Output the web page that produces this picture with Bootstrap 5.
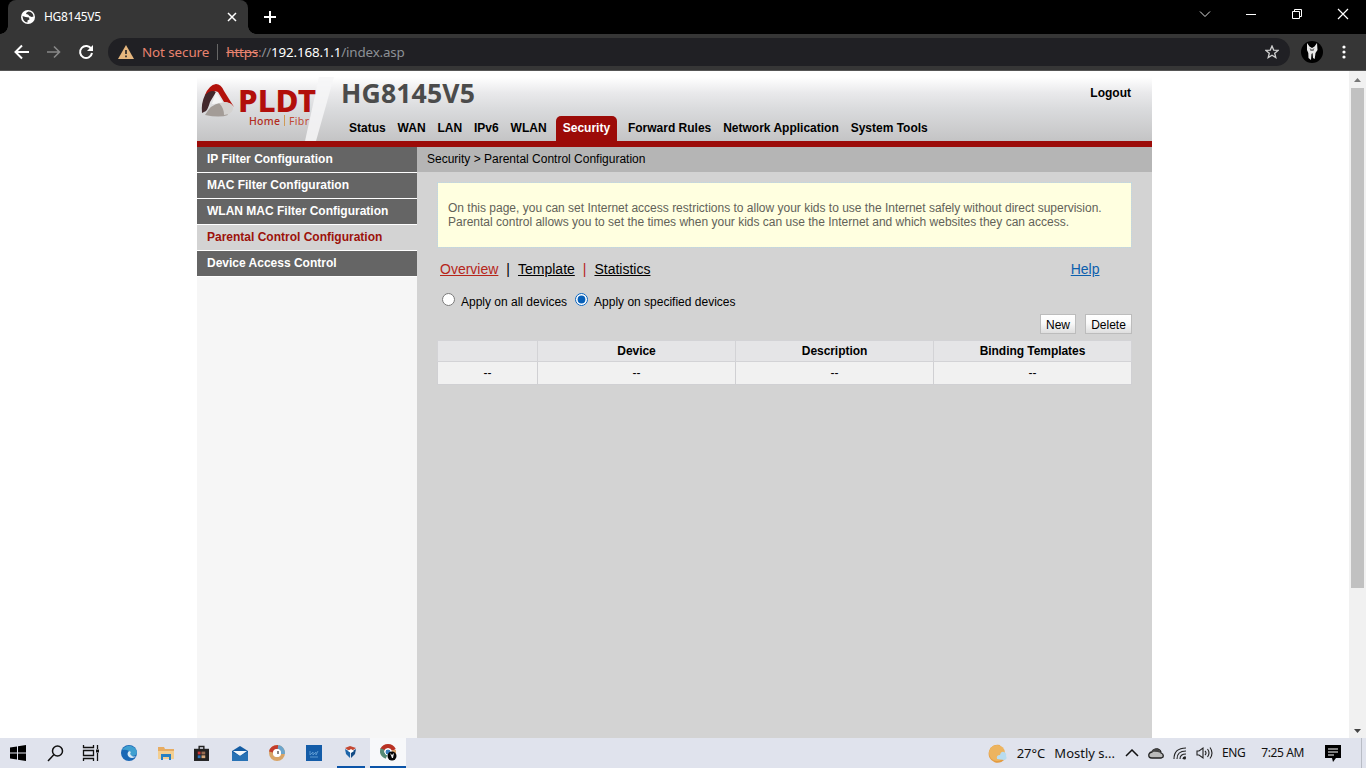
<!DOCTYPE html>
<html lang="en">
<head>
<meta charset="utf-8">
<meta name="viewport" content="width=device-width, initial-scale=1">
<title>HG8145V5</title>
<link href="https://cdn.jsdelivr.net/npm/bootstrap@5.3.0/dist/css/bootstrap.min.css" rel="stylesheet">
<style>
body{height:768px;overflow:hidden;background:#fff;font:12px/14px "Liberation Sans",sans-serif;color:#000}
svg{display:block;flex:none}
a{color:inherit}
.ui{font-family:"Noto Sans","Open Sans",sans-serif}
.tabstrip{height:34px;background:#000;padding-left:8px}
.browser-tab{width:240px;height:34px;background:#363636;border-radius:8px 8px 0 0;color:#fff;padding:0 10px 0 13px;margin-right:15px}
.browser-tab::before,.browser-tab::after{content:"";position:absolute;bottom:0;width:8px;height:8px}
.browser-tab::before{left:-8px;background:radial-gradient(circle at 0 0,#000 7.5px,#363636 8px)}
.browser-tab::after{right:-8px;background:radial-gradient(circle at 100% 0,#000 7.5px,#363636 8px)}
.tab-title{font-size:12px;letter-spacing:-.3px;margin-left:9px}
.win-buttons{gap:34px;margin:0 17px 6px 0}
.toolbar{height:37px;background:#363636;padding:0 14px;border-bottom:1px solid #555}
.nav-icons{gap:16px}
.omnibox{width:1182px;height:28px;border-radius:14px;background:#202024;margin:0 11px 0 14px;padding:0 11px 0 10px;font-size:13.4px}
.warn{color:#e8836f;margin-left:8px;letter-spacing:-.08px}
.urlsep{width:1px;height:16px;background:#666;margin:0 8px}
.url{color:#8d9196;letter-spacing:-.17px}
.url s{color:#e8836f}
.url i{color:#a36a5f;font-style:normal}
.dots{margin-right:6px}
.viewport{height:667px}
.site{width:955px;margin-left:197px;padding-top:6px}
.hdr{height:64px;background:linear-gradient(#fff,#e9e9eb 25%,#dadbdd 50%,#c4c4c5)}
.logo-box{width:144px;height:64px}
.model{font:bold 26.6px/30px "Noto Sans","Open Sans",sans-serif;color:#4b4b4b;margin-top:1px;letter-spacing:.15px}
.logout{margin:9px 21px 0 0}
.menu{height:25px;padding-left:8px;gap:11.9px}
.menu a{text-decoration:none;line-height:24px;white-space:nowrap}
.menu .picked{background:#9c0b08;color:#fff;border-radius:5px 5px 0 0;width:61px;text-align:center;margin:0 -.9px 0 -2.6px}
.redline{height:6px;background:#9c0b08}
.side{width:220px;background:#f6f6f6}
.side a{display:block;height:26px;line-height:24px;padding-left:10px;background:#656565;color:#fff;border-bottom:1px solid #fff;font-weight:bold;text-decoration:none}
.side a.here{background:#d3d3d3;color:#9c120b}
.main{background:#d3d3d3;height:591px}
.crumbs{height:25px;line-height:24px;background:#b5b5b5;padding-left:10px}
.panel{padding:10px 20px 0 20px}
.notice{height:66px;background:#ffffe0 padding-box;border:1px dotted #bcd9e2;padding:18px 10px;color:#626258;white-space:nowrap}
.links{font-size:14px;line-height:18px;margin:12px 32.5px 0 3px}
.links .current{color:#b6251a}
.links .help{color:#0c5fae}
.choices{margin:16px 0 0 5px;height:14px}
.choices input{width:13px;height:13px;margin:-3px 6px 0 0;accent-color:#0860b8}
.choices label{padding-top:1px}
.choices label + input{margin-left:8px}
.actions{margin-top:6px;height:20px;gap:9px}
.tool-btn{width:36px;height:20px;padding:1px 0 0;border:1px solid #bcbcbc;border-radius:0;background:linear-gradient(#fff,#f9f9f9 45%,#dedede);font-size:12px;line-height:18px;color:#000}
.tool-btn.wide{width:47px}
.grid-table{width:695px;margin-top:6px;table-layout:fixed;border:1px solid #d8d8dc;border-collapse:collapse;text-align:center}
.grid-table .pick-col{width:100px}
.grid-table .data-col{width:198px}
.grid-table th{height:21px;background:repeating-conic-gradient(#dedfe2 0 25%,#ebebec 0 50%) 0 0/2px 2px;border:1px solid #d3d3d6;padding:0;letter-spacing:-.05px}
.grid-table td{height:23px;background:#f1f1f1;border:1px solid #d0d0d3;padding:0}
.scroll{width:17px;background:#f1f1f1;padding:7px 0 5px}
.thumb{width:13px;height:500px;background:#c1c1c1;margin-top:6px}
.taskbar{height:30px;background:#e0e3ed;color:#111;font-size:13px}
.task{width:37px;height:30px;display:flex;align-items:center;justify-content:center;padding-right:1px}
.task.running{width:28px;margin-left:4px;border-bottom:2px solid #0b54a8}
.task.active{width:36px;margin-left:5px;background:#f7f8fa}
.weather{gap:9px;margin-right:10px}
.tray{gap:9px}
.clock{font-size:12px;letter-spacing:-.4px;gap:16px;margin:0 21px 0 9px}
.peek{width:1px;height:30px;background:#b8bcc5;margin:0 4px 0 20px}
</style>
</head>
<body>
<header class="ui">
  <div class="tabstrip d-flex align-items-center">
    <div class="browser-tab position-relative d-flex align-items-center">
      <svg width="14" height="14" viewBox="0 0 14 14"><circle cx="7" cy="7" r="7" fill="#fff"/><path d="M7.500 1.500Q5 2 5 4l2 .5 1.500 1.500L10.500 7l2-.5Q12 2 7.500 1.500M1.500 6l3 1 3.500.5.500 2L6.500 10.500v2Q2 12 1.500 6" fill="#363636"/></svg>
      <span class="tab-title">HG8145V5</span>
      <svg class="ms-auto" width="12" height="12" viewBox="0 0 12 12" stroke="#fff" stroke-width="1.5"><path d="M2 2l8 8M10 2l-8 8"/></svg>
    </div>
    <svg width="14" height="14" viewBox="0 0 14 14" stroke="#fff" stroke-width="2"><path d="M7 1v12M1 7h12"/></svg>
    <div class="win-buttons ms-auto d-flex align-items-center">
      <svg width="12" height="12" viewBox="0 0 12 12" fill="none" stroke="#ddd"><path d="M1 3.500l5 5 5-5"/></svg>
      <svg width="12" height="12" viewBox="0 0 12 12" stroke="#fff"><path d="M1 6.500h10"/></svg>
      <svg width="12" height="12" viewBox="0 0 12 12" fill="none" stroke="#fff"><path d="M1.500 3.500h7v7h-7zM3.500 3V1.500h7v7H9"/></svg>
      <svg width="12" height="12" viewBox="0 0 12 12" stroke="#fff" stroke-width="1.200"><path d="M1 1l10 10M11 1L1 11"/></svg>
    </div>
  </div>
  <div class="toolbar d-flex align-items-center">
    <div class="nav-icons d-flex">
      <svg width="16" height="16" viewBox="0 0 16 16" fill="none" stroke="#fff" stroke-width="2"><path d="M15 8H2.500M8 1.500L1.500 8 8 14.500"/></svg>
      <svg width="16" height="16" viewBox="0 0 16 16" fill="none" stroke="#888" stroke-width="1.600"><path d="M1 8h12.500M8 2.500L13.500 8 8 13.500"/></svg>
      <svg width="16" height="16" viewBox="0 0 16 16" fill="none" stroke="#fff" stroke-width="2"><path d="M13.300 5A6 6 0 1 0 14 9"/><path d="M15 1v6H9z" fill="#fff" stroke="none"/></svg>
    </div>
    <div class="omnibox d-flex align-items-center">
      <svg width="16" height="14" viewBox="0 0 16 14"><path d="M8 0l8 14H0z" fill="#e5b67e"/><path d="M8 5v4M8 10.500v1.700" stroke="#202024" stroke-width="1.600"/></svg>
      <span class="warn">Not secure</span><span class="urlsep"></span>
      <span class="url"><s>https</s><i>:</i>//<span class="text-white">192.168.1.1</span>/index.asp</span>
      <svg class="ms-auto" width="14" height="14" viewBox="0 0 14 14" fill="none" stroke="#d0d0d0" stroke-width="1.300"><path d="M7 1l1.700 4.100 4.400.3-3.400 2.800L10.800 12.500 7 10.200 3.200 12.500l1.100-4.300L.9 5.400l4.400-.3z"/></svg>
    </div>
    <svg width="22" height="22" viewBox="0 0 22 22"><circle cx="11" cy="11" r="11" fill="#000"/><path d="M6 2l2.500 3.500L11 7l2.500-1.500L16 2l.5 7-2 3-.8 6-1.700-1-.5-5-1 1-.5 6L7.500 17 7.300 12 6 9z" fill="#e8e8e8"/><path d="M8.500 7l2.500 1.500L13.500 7l-1 3h-3z" fill="#777"/></svg>
    <svg class="dots ms-auto" width="4" height="14" viewBox="0 0 4 14" fill="#fff"><circle cx="2" cy="2" r="1.600"/><circle cx="2" cy="7" r="1.600"/><circle cx="2" cy="12" r="1.600"/></svg>
  </div>
</header>

<div class="viewport d-flex">
  <div class="site">
    <div class="hdr d-flex">
      <svg class="logo-box" viewBox="0 0 144 64">
        <path d="M122 0h15l-18 64h-11z" fill="#f6f6f7" opacity=".85"/>
        <path d="M8 18Q12 8 19 7q5 0 8 7l10 16q-4-5-10-5l-6-10-3-1-8 8z" fill="#b3110b"/>
        <path d="M8 18q6-6 11-3l-6 10q-2 7-4 9l-4 2Q4 26 8 18z" fill="#43282c"/>
        <path d="M19 15l7 11-11 1z" fill="#f5f5f5"/>
        <path d="M8 38q6-11 15-12 6 7 8 12-8 3-23 0z" fill="#a39c97"/>
        <path d="M22 26q10-2 13 2 3 6-3 9l-5 1q0-7-5-12z" fill="#d4d2d0"/>
        <text x="41" y="34.500" textLength="78" lengthAdjust="spacingAndGlyphs" font-family="Noto Sans,sans-serif" font-weight="800" font-size="30" fill="#b20f0b">PLDT</text>
        <text x="52" y="48" textLength="31" font-family="Noto Sans,sans-serif" font-weight="500" font-size="10.500" fill="#b22b20">Home</text>
        <path d="M87.500 38v11" stroke="#d09a55"/>
        <text x="92" y="48" textLength="20" font-family="Noto Sans,sans-serif" font-size="10.500" fill="#c14a35">Fibr</text>
      </svg>
      <div class="flex-grow-1 d-flex flex-column">
        <div class="d-flex justify-content-between"><div class="model">HG8145V5</div><b class="logout">Logout</b></div>
        <nav class="menu fw-bold d-flex mt-auto">
          <a href="#">Status</a><a href="#">WAN</a><a href="#">LAN</a><a href="#">IPv6</a><a href="#">WLAN</a><a href="#" class="picked">Security</a><a href="#">Forward Rules</a><a href="#">Network Application</a><a href="#">System Tools</a>
        </nav>
      </div>
    </div>
    <div class="redline"></div>
    <div class="d-flex">
      <aside class="side"><a href="#">IP Filter Configuration</a><a href="#">MAC Filter Configuration</a><a href="#">WLAN MAC Filter Configuration</a><a href="#" class="here">Parental Control Configuration</a><a href="#">Device Access Control</a></aside>
      <main class="main flex-grow-1">
        <div class="crumbs">Security &gt; Parental Control Configuration</div>
        <div class="panel">
          <div class="notice">On this page, you can set Internet access restrictions to allow your kids to use the Internet safely without direct supervision.<br>Parental control allows you to set the times when your kids can use the Internet and which websites they can access.</div>
          <div class="links d-flex">
            <a href="#" class="current">Overview</a><span class="mx-2">|</span><a href="#">Template</a><span class="current mx-2">|</span><a href="#">Statistics</a><a href="#" class="help ms-auto">Help</a>
          </div>
          <div class="choices d-flex align-items-center"><input type="radio" name="scope" id="all"><label for="all">Apply on all devices</label><input type="radio" name="scope" id="some" checked><label for="some">Apply on specified devices</label></div>
          <div class="actions d-flex justify-content-end"><button class="btn tool-btn">New</button><button class="btn tool-btn wide">Delete</button></div>
          <table class="grid-table"><colgroup><col class="pick-col"><col class="data-col"><col class="data-col"><col></colgroup>
            <thead><tr><th></th><th>Device</th><th>Description</th><th>Binding Templates</th></tr></thead>
            <tbody><tr><td>--</td><td>--</td><td>--</td><td>--</td></tr></tbody></table>
        </div>
      </main>
    </div>
  </div>
  <div class="scroll ms-auto d-flex flex-column align-items-center">
    <svg width="7" height="4" viewBox="0 0 9 5"><path d="M0 5l4.500-5L9 5z" fill="#777"/></svg><div class="thumb"></div><svg class="mt-auto" width="7" height="4" viewBox="0 0 9 5"><path d="M0 0h9L4.500 5z" fill="#444"/></svg>
  </div>
</div>

<footer class="taskbar ui d-flex align-items-center">
  <div class="task"><svg width="16" height="16" viewBox="0 0 16 16"><path d="M0 2.500L7 1.500V7.500H0zM8 1.300L16 0v7.500H8zM0 8.500h7v6L0 13.500zM8 8.500h8V16L8 14.700z"/></svg></div>
  <div class="task"><svg width="17" height="17" viewBox="0 0 17 17" fill="none" stroke="#111" stroke-width="1.500"><circle cx="10.500" cy="6" r="5"/><path d="M7 9.500L1 16"/></svg></div>
  <div class="task pe-1"><svg width="18" height="16" viewBox="0 0 18 16" fill="none" stroke="#111" stroke-width="1.300"><path d="M1.500 0v2.500h10V0M1.500 5.500h10v5h-10zM1.500 16v-2.500h10V16M15.500 0v4M15.500 8v8"/><path d="M14 4.500h3v3h-3z" fill="#111" stroke="none"/></svg></div>
  <div class="task"><svg width="16" height="16" viewBox="0 0 16 16"><circle cx="8" cy="8" r="8" fill="#1a67b5"/><path d="M1 5Q5 0 10 1q6 2 6 7-1 3-5 3-3 0-2-3Q8 4 1 5" fill="#3f9fd0"/><path d="M8 6q-3 3 0 6 3 2 6 0l1-1q-2 1-4 0-3-2-1-4z" fill="#d7e9f5"/></svg></div>
  <div class="task"><svg width="16" height="15" viewBox="0 0 16 15"><path d="M0 1h6l1 2h9v10H0z" fill="#e7ac62"/><path d="M0 5h16v8H0z" fill="#f3cf92"/><path d="M3 14V8h10v6h-2v-3H5v3z" fill="#2680c4"/></svg></div>
  <div class="task pe-1"><svg width="15" height="16" viewBox="0 0 16 17"><path d="M5.500 5V1.500h5V5" fill="none" stroke="#222" stroke-width="1.500"/><path d="M0 4h16v13H0z" fill="#222"/><path d="M4 7h3v3H4z" fill="#c33"/><path d="M8 7h4v3H8z" fill="#976b50"/><path d="M4 11h3v3H4z" fill="#2774bd"/><path d="M8 11h4v3H8z" fill="#d5a87c"/></svg></div>
  <div class="task"><svg width="16" height="15" viewBox="0 0 16 15"><path d="M0 5l8-5 8 5v10H0z" fill="#145ca3"/><path d="M1 5h14l-7 5z" fill="#f3f7fa"/><path d="M0 6l8 4 8-4v9H0z" fill="#2872b5"/></svg></div>
  <div class="task"><svg width="16" height="16" viewBox="0 0 16 16" fill="none" stroke-width="4"><circle cx="8" cy="8" r="6" stroke="#d8a466"/><path d="M2 7Q3 2 9 2" stroke="#c43c2c"/><path d="M9 2q5 1 5 7" stroke="#6ca5cc"/><circle cx="8" cy="8" r="4" fill="#fff" stroke="none"/><path d="M9 6v3" stroke="#444" stroke-width="1.300"/></svg></div>
  <div class="task"><svg width="16" height="16" viewBox="0 0 16 16"><path d="M0 0h16v16H0z" fill="#145ca8"/><path d="M4 6v4l3-3v3l3-3v3l2-4M4 12h8" fill="none" stroke="#5a98d0"/></svg></div>
  <div class="task running"><svg width="11" height="12" viewBox="0 0 11 12"><path d="M0 2l5-2 6 2-3 2H3z" fill="#c44732"/><path d="M0 3l5 3v6L1 8z" fill="#1d65a9"/><path d="M11 3L6 6v6l4-4z" fill="#134b85"/><path d="M3 5l3-2 3 2-3 2z" fill="#fff"/></svg></div>
  <div class="task running active pe-0"><svg width="17" height="17" viewBox="0 0 17 17"><g fill="none" stroke-width="4"><path d="M2 6q2-4 6-4t6 4" stroke="#b93224"/><path d="M2.500 5q-2 5 4 8" stroke="#578b77"/><path d="M14 6v5" stroke="#d9a26c"/></g><circle cx="8" cy="8" r="3" fill="#3c80bd" stroke="#fff"/><circle cx="12" cy="12" r="4.500" fill="#050505"/><path d="M10 9l2 2 2-2-1 5h-1z" fill="#eee"/></svg></div>

  <div class="ms-auto d-flex align-items-center">
    <div class="weather d-flex align-items-center">
      <svg width="20" height="20" viewBox="0 0 20 20"><path d="M12 2A9 9 0 1 0 18 14Q8 14 12 2" fill="#e39b40"/><circle cx="9" cy="10" r="8" fill="#edb45f"/><path d="M9 16q-1-4 3-4 1-4 4-3 3 1 2 4 2 3-2 4z" fill="#b8dcf0"/></svg>
      <span>27°C</span><span>Mostly s...</span>
    </div>
    <div class="tray d-flex align-items-center">
      <svg width="14" height="8" viewBox="0 0 14 8" fill="none" stroke="#111" stroke-width="1.500"><path d="M1 7l6-6 6 6"/></svg>
      <svg width="16" height="12" viewBox="0 0 16 12"><path d="M4 11Q0 11 1 7q1-2 3-2 2-4 6-3 3 1 3 4 3 1 2 4l-2 1z" fill="#bbb" stroke="#222" stroke-width="1.300"/><path d="M3 5q2-4 6-3 3 1 4 4-5-2-10-1" fill="#444"/></svg>
      <svg width="14" height="14" viewBox="0 0 14 14" fill="none" stroke="#222" stroke-width="1.100"><path d="M1 13Q1 2 13 2M4 13q0-8 9-8M7 13q0-5 6-5M10 13q0-2 3-2"/><circle cx="11.500" cy="12" r="1.500" fill="#222" stroke="none"/></svg>
      <svg width="17" height="14" viewBox="0 0 17 14" fill="none" stroke="#222" stroke-width="1.100"><path d="M1 5h2l4-3v10L3 9H1zM9 5q2 2 0 4M11.500 3q3 4 0 8M14 1.500q4 5.500 0 11"/></svg>
    </div>
    <div class="clock d-flex"><span>ENG</span><span>7:25 AM</span></div>
    <svg width="16" height="17" viewBox="0 0 16 17"><path d="M0 0h16v13h-5l-3 4-1-4H0z"/><path d="M3 4h10M3 7h10M3 10h6" stroke="#fff"/></svg>
    <span class="peek"></span>
  </div>
</footer>
<script src="https://cdn.jsdelivr.net/npm/bootstrap@5.3.0/dist/js/bootstrap.bundle.min.js"></script>
</body>
</html>
